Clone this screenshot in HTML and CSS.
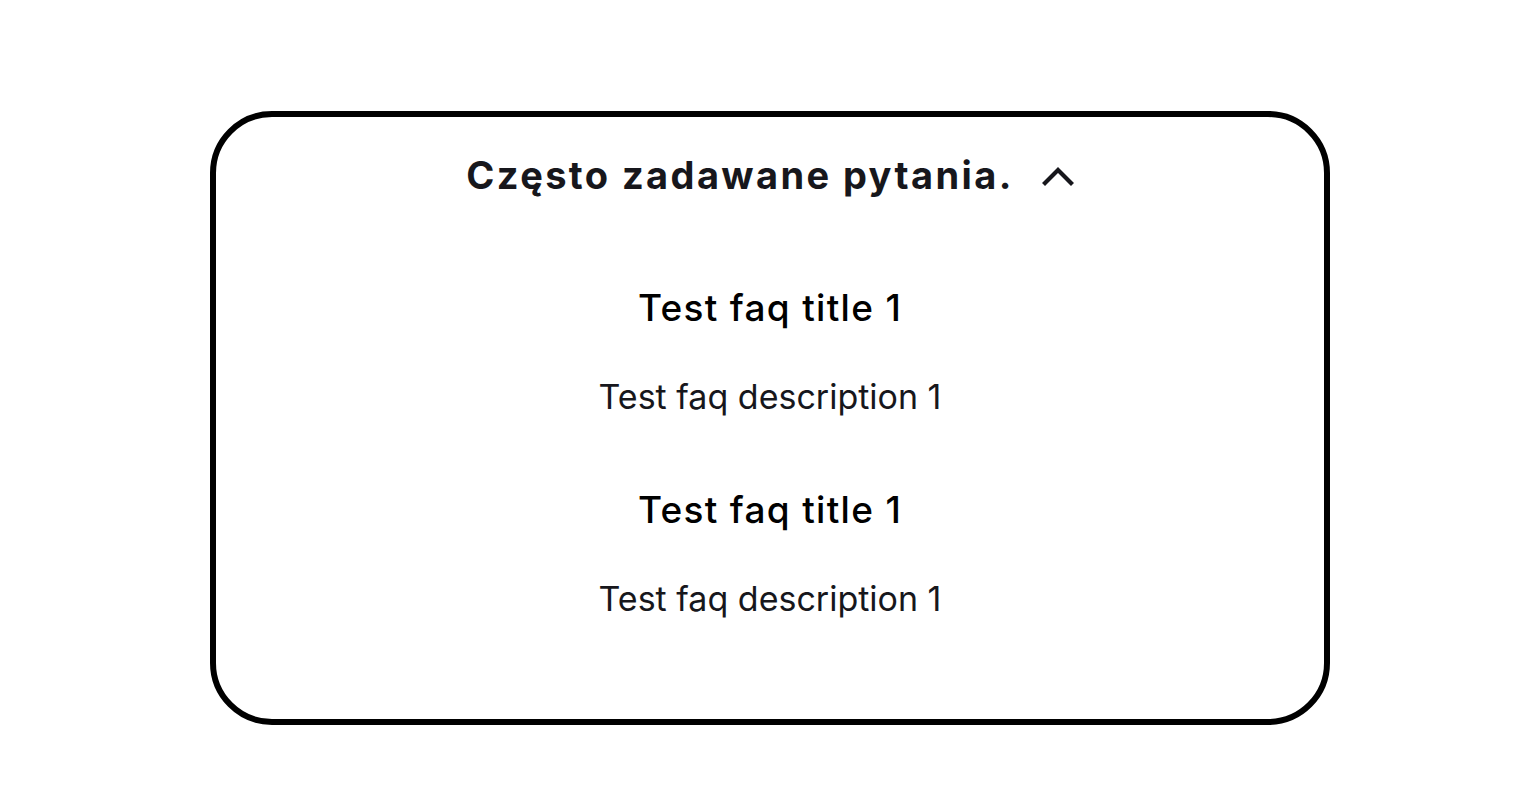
FILE: index.html
```html
<!DOCTYPE html>
<html lang="pl">
<head>
<meta charset="utf-8">
<title>FAQ</title>
<link rel="stylesheet" href="styles.css">
</head>
<body>
<main class="page">
  <section class="faq">
    <button class="faq-header" type="button">
      <span class="faq-heading">Często zadawane pytania.</span>
      <svg class="chevron" width="32" height="20" viewBox="0 0 32 20" aria-hidden="true">
        <path d="M3 17 L16 4 L29 17" fill="none" stroke="#17171c" stroke-width="4.2" stroke-linecap="square" stroke-linejoin="miter"/>
      </svg>
    </button>
    <div class="faq-list">
      <div class="faq-item">
        <h3 class="faq-title">Test faq title 1</h3>
        <p class="faq-desc">Test faq description 1</p>
      </div>
      <div class="faq-item">
        <h3 class="faq-title">Test faq title 1</h3>
        <p class="faq-desc">Test faq description 1</p>
      </div>
    </div>
  </section>
</main>
</body>
</html>
```

FILE: styles.css
```css
* { box-sizing: border-box; }
html, body { margin: 0; padding: 0; background: #fff; }
body { font-family: "Inter", "Noto Sans", sans-serif; color: #17171c; }
.page { display: flex; justify-content: center; padding-top: 111px; }
.faq {
  width: 1120px;
  border: 6px solid #000;
  border-radius: 62px;
  padding: 34px 0 98px;
  display: flex;
  flex-direction: column;
  align-items: center;
}
.faq-header {
  display: flex;
  align-items: center;
  gap: 28px;
  background: none;
  border: 0;
  padding: 0;
  font: inherit;
  color: inherit;
  height: 48px;
  cursor: pointer;
}
.faq-heading { font-size: 38px; font-weight: 700; line-height: 48px; letter-spacing: 2.4px; }
.chevron { display: block; margin-top: 2px; }
.faq-list { display: flex; flex-direction: column; align-items: center; margin-top: 85px; gap: 67px; }
.faq-item { display: flex; flex-direction: column; align-items: center; gap: 43px; }
.faq-title { margin: 0; font-size: 37px; font-weight: 500; line-height: 48px; letter-spacing: 1.3px; color: #000; }
.faq-desc { margin: 0; font-size: 34px; font-weight: 400; line-height: 44px; color: #17171c; }
```
